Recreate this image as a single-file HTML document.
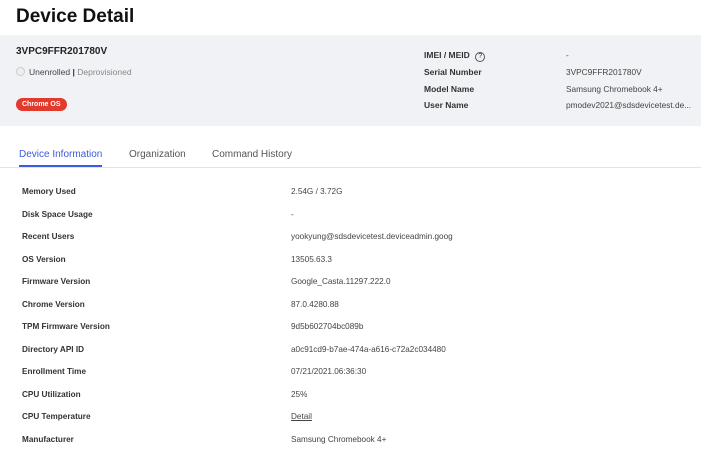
<!DOCTYPE html>
<html><head><style>
*{margin:0;padding:0;box-sizing:border-box}
body{width:701px;height:454px;overflow:hidden;background:#fff;font-family:"Liberation Sans",Arial,sans-serif;color:#222;position:relative}
.a{position:absolute;white-space:nowrap}
h1{position:absolute;left:16px;top:6px;font-size:19px;font-weight:bold;color:#111}
.panel{position:absolute;left:0;top:35px;width:701px;height:91px;background:#f1f2f5}
.lbl{font-size:8.5px;font-weight:bold;color:#333}
.val{font-size:8.3px;color:#444}
.tab{font-size:10px;color:#555}
.rl{position:absolute;left:22px;font-size:8.2px;font-weight:bold;color:#333;white-space:nowrap}
.rv{position:absolute;left:291px;font-size:8.2px;color:#444;white-space:nowrap}
</style></head><body>
<h1>Device Detail</h1>
<div class="panel"></div>
<div class="a" style="left:16px;top:46px;font-size:10px;font-weight:bold;color:#222">3VPC9FFR201780V</div>
<div class="a" style="left:16px;top:67px;width:9px;height:9px;border:1px solid #ccc;border-radius:50%;background:#eee"></div>
<div class="a" style="left:29px;top:67px;font-size:8.5px;color:#444">Unenrolled <b style="color:#333">|</b> <span style="color:#888">Deprovisioned</span></div>
<div class="a" style="left:16px;top:98px;height:13px;padding:0 6px;background:#e23a2d;color:#fff;border-radius:7px;font-size:7px;font-weight:bold;line-height:13px">Chrome OS</div>
<div class="a lbl" style="left:424px;top:50px">IMEI / MEID <span style="display:inline-block;width:10px;height:10px;border:1px solid #555;border-radius:50%;font-size:7px;text-align:center;line-height:8px;font-weight:normal;margin-left:3px">?</span></div>
<div class="a lbl" style="left:424px;top:67px">Serial Number</div>
<div class="a lbl" style="left:424px;top:84px">Model Name</div>
<div class="a lbl" style="left:424px;top:100px">User Name</div>
<div class="a val" style="left:566px;top:50px">-</div>
<div class="a val" style="left:566px;top:67px">3VPC9FFR201780V</div>
<div class="a val" style="left:566px;top:84px">Samsung Chromebook 4+</div>
<div class="a val" style="left:566px;top:100px;width:130px;overflow:hidden">pmodev2021@sdsdevicetest.de...</div>
<div class="a tab" style="left:19px;top:149px;color:#3b5bdb">Device Information</div>
<div class="a" style="left:19px;top:165px;width:83px;height:2px;background:#3b5bdb"></div>
<div class="a tab" style="left:129px;top:149px">Organization</div>
<div class="a tab" style="left:212px;top:149px">Command History</div>
<div class="a" style="left:0;top:167px;width:701px;height:1px;background:#e4e4e4"></div>
<div class="rl" style="top:187px">Memory Used</div><div class="rv" style="top:187px">2.54G / 3.72G</div>
<div class="rl" style="top:210px">Disk Space Usage</div><div class="rv" style="top:210px">-</div>
<div class="rl" style="top:232px">Recent Users</div><div class="rv" style="top:232px">yookyung@sdsdevicetest.deviceadmin.goog</div>
<div class="rl" style="top:255px">OS Version</div><div class="rv" style="top:255px">13505.63.3</div>
<div class="rl" style="top:277px">Firmware Version</div><div class="rv" style="top:277px">Google_Casta.11297.222.0</div>
<div class="rl" style="top:300px">Chrome Version</div><div class="rv" style="top:300px">87.0.4280.88</div>
<div class="rl" style="top:322px">TPM Firmware Version</div><div class="rv" style="top:322px">9d5b602704bc089b</div>
<div class="rl" style="top:345px">Directory API ID</div><div class="rv" style="top:345px">a0c91cd9-b7ae-474a-a616-c72a2c034480</div>
<div class="rl" style="top:367px">Enrollment Time</div><div class="rv" style="top:367px">07/21/2021.06:36:30</div>
<div class="rl" style="top:390px">CPU Utilization</div><div class="rv" style="top:390px">25%</div>
<div class="rl" style="top:412px">CPU Temperature</div><div class="rv" style="top:412px;text-decoration:underline">Detail</div>
<div class="rl" style="top:435px">Manufacturer</div><div class="rv" style="top:435px">Samsung Chromebook 4+</div>
</body></html>
